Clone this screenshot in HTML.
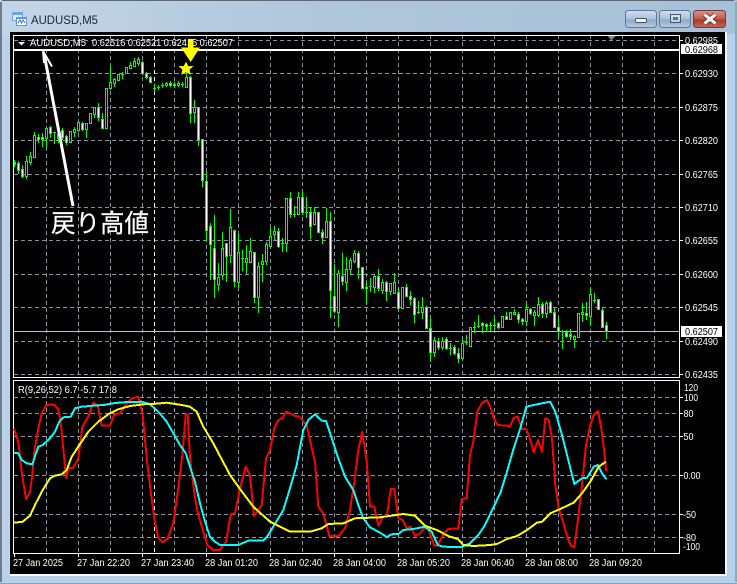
<!DOCTYPE html>
<html><head><meta charset="utf-8"><title>AUDUSD,M5</title>
<style>
html,body{margin:0;padding:0;background:#b8d0ea;width:737px;height:584px;overflow:hidden}
svg{display:block}
text{font-family:"Liberation Sans","Noto Sans CJK JP",sans-serif;font-size:10px;fill:#fff}
.c{shape-rendering:crispEdges}
</style></head><body>
<svg width="737" height="584" viewBox="0 0 737 584" xmlns="http://www.w3.org/2000/svg">
<defs>
<linearGradient id="tb" x1="0" x2="1" y1="0" y2="0"><stop offset="0" stop-color="#c4d5e7"/><stop offset=".45" stop-color="#afc6dc"/><stop offset="1" stop-color="#a7c0d8"/></linearGradient>
<linearGradient id="bb" x1="0" x2="0" y1="0" y2="1"><stop offset="0" stop-color="#cfdeee"/><stop offset=".5" stop-color="#a9c1da"/><stop offset=".55" stop-color="#8fabc8"/><stop offset="1" stop-color="#b5cbe2"/></linearGradient>
<linearGradient id="bc" x1="0" x2="0" y1="0" y2="1"><stop offset="0" stop-color="#d99486"/><stop offset=".5" stop-color="#c4584a"/><stop offset=".55" stop-color="#ae3626"/><stop offset="1" stop-color="#c46a58"/></linearGradient>
</defs>
<!-- window frame -->
<rect width="737" height="584" fill="#b8d0ea"/>
<rect x="0" y="0" width="737" height="34" fill="url(#tb)"/>
<g class="c">
<rect x="2" y="0" width="732" height="1" fill="#5c6a78"/>
<rect x="0" y="2" width="2" height="580" fill="#6d7d8d"/>
<rect x="2" y="34" width="8" height="540" fill="#bcd2ea"/>
<rect x="735" y="2" width="2" height="580" fill="#50c4d6"/>
<rect x="0" y="583" width="737" height="1" fill="#46bfd2"/>
<rect x="725" y="32" width="2" height="544" fill="#f4f8fc"/>
<rect x="10" y="574" width="717" height="2" fill="#f4f8fc"/>
<rect x="10" y="32" width="715" height="542" fill="#000"/>
</g>
<!-- title icon -->
<g class="c">
<rect x="12" y="12" width="11" height="9" fill="#6ea6e4"/><rect x="13" y="15" width="9" height="5" fill="#dfeafa"/>
<rect x="16" y="17" width="11" height="9" fill="#5c98dc"/><rect x="17" y="19" width="9" height="6" fill="#fff"/>
</g>
<path d="M18 23l2-3 1.500 3 1.500-3 2 3" fill="none" stroke="#3b78c4" stroke-width="1"/>
<text x="31" y="24" style="font-size:12px;fill:#1c2530" textLength="67" lengthAdjust="spacingAndGlyphs">AUDUSD,M5</text>
<!-- buttons -->
<rect x="625.500" y="10.500" width="31" height="17" rx="3" fill="url(#bb)" stroke="#5f7a96"/>
<rect x="659.500" y="10.500" width="31" height="17" rx="3" fill="url(#bb)" stroke="#5f7a96"/>
<rect x="693.500" y="10.500" width="32" height="17" rx="3" fill="url(#bc)" stroke="#6e3a40"/>
<rect x="635.500" y="18.500" width="11" height="4" rx="1" fill="#f2f5f8" stroke="#45566a"/>
<rect x="670.500" y="14.500" width="10" height="8" fill="none" stroke="#45566a"/><rect x="672" y="16" width="7" height="5" fill="none" stroke="#eef3f8"/><rect x="673" y="17" width="5" height="3" fill="#45566a" opacity=".7"/>
<path d="M704.500 14.500l11 9M715.500 14.500l-11 9" stroke="#5a2a28" stroke-width="5"/>
<path d="M704.500 14.500l11 9M715.500 14.500l-11 9" stroke="#f4f2f2" stroke-width="3.200"/>
<!-- grid -->
<g class="c" fill="none" stroke="#87949f" stroke-dasharray="4 3">
<path d="M14 40.500H680M14 73.500H680M14 107.500H680M14 140.500H680M14 174.500H680M14 207.500H680M14 240.500H680M14 274.500H680M14 307.500H680M14 341.500H680M14 374.500H680M14 397.500H680M14 413.500H680M14 436.500H680M14 475.500H680M14 514.500H680M14 537.500H680"/>
<path d="M46.500 35V378M78.500 35V378M110.500 35V378M142.500 35V378M174.500 35V378M206.500 35V378M238.500 35V378M270.500 35V378M302.500 35V378M334.500 35V378M366.500 35V378M398.500 35V378M430.500 35V378M462.500 35V378M494.500 35V378M526.500 35V378M558.500 35V378M590.500 35V378M622.500 35V378M654.500 35V378"/>
<path d="M46.500 380V553M78.500 380V553M110.500 380V553M142.500 380V553M174.500 380V553M206.500 380V553M238.500 380V553M270.500 380V553M302.500 380V553M334.500 380V553M366.500 380V553M398.500 380V553M430.500 380V553M462.500 380V553M494.500 380V553M526.500 380V553M558.500 380V553M590.500 380V553M622.500 380V553M654.500 380V553"/>
<path stroke="#fff" d="M154.500 35V378M154.500 380V553"/>
</g>
<!-- bid line -->
<rect class="c" x="14" y="331" width="666" height="1" fill="#c0c0c0"/>
<!-- candles -->
<g class="c" fill="none" stroke="#00ff00" stroke-width="1">
<path d="M14.500 160V167M18.500 161V174M22.500 165V178M26.500 156V179M30.500 152V165M34.500 132V157M38.500 134V143M42.500 133V147M46.500 128V148M50.500 126V138M54.500 132V144M58.500 132V143M62.500 128V140M66.500 135V145M70.500 131V142M74.500 127V137M78.500 122V132M82.500 122V131M86.500 123V138M90.500 113V123M94.500 107V118M98.500 103V121M102.500 113V129M106.500 88V128M110.500 65V90M114.500 78V87M118.500 74V80M122.500 72V79M126.500 67V74M130.500 62V69M134.500 58V67M138.500 57V66M142.500 61V75M146.500 72V79M150.500 76V83M154.500 84V92M158.500 85V90M162.500 83V88M166.500 82V87M170.500 81V87M174.500 82V88M178.500 81V87M182.500 82V87M186.500 72V87M190.500 76V123M194.500 100V123M198.500 107V146M202.500 139V187M206.500 171V242M210.500 223V280M214.500 215V298M218.500 263V291M222.500 232V280M226.500 243V282M230.500 209V263M234.500 230V287M238.500 233V288M242.500 250V271M246.500 245V274M250.500 238V262M254.500 252V303M258.500 262V313M262.500 254V282M266.500 242V265M270.500 227V246M274.500 226V240M278.500 228V248M282.500 238V252M286.500 198V252M290.500 192V218M294.500 206V217M298.500 192V214M302.500 192V215M306.500 197V218M310.500 208V239M314.500 207V224M318.500 212V233M322.500 229V244M326.500 208V237M330.500 212V318M334.500 264V313M338.500 270V327M342.500 253V285M346.500 257V291M350.500 258V275M354.500 250V263M358.500 251V279M362.500 267V289M366.500 282V303M370.500 278V292M374.500 275V293M378.500 269V291M382.500 279V294M386.500 281V301M390.500 283V295M394.500 273V294M398.500 287V308M402.500 287V308M406.500 284V297M410.500 291V305M414.500 297V323M418.500 301V314M422.500 297V319M426.500 306V329M430.500 317V362M434.500 337V357M438.500 338V350M442.500 337V350M446.500 337V350M450.500 343V355M454.500 345V355M458.500 348V363M462.500 340V358M466.500 335V345M470.500 327V346M474.500 322V333M478.500 315V328M482.500 322V333M486.500 323V332M490.500 322V331M494.500 317V330M498.500 322V329M502.500 316V328M506.500 312V320M510.500 312V319M514.500 309V315M518.500 312V323M522.500 318V325M526.500 303V325M530.500 308V315M534.500 310V326M538.500 297V317M542.500 302V318M546.500 301V318M550.500 301V313M554.500 308V327M558.500 318V338M562.500 330V349M566.500 330V338M570.500 329V340M574.500 335V348M578.500 313V337M582.500 303V322M586.500 302V320M590.500 287V326M594.500 293V303M598.500 299V309M602.500 307V328M606.500 322V339"/>
<path d="M53 132.500h3M281 243.500h3M293 214.500h3M305 212.500h3M241 258.500h3M369 286.500h3M449 348.500h3M561 331.500h3M465 342.500h3M473 327.500h3M477 326.500h3M489 325.500h3M493 325.500h3M153 88.500h3M157 87.500h3M161 85.500h3M181 84.500h3M121 74.500h3M417 312.500h3M593 300.500h3"/>
<!-- hollow -->
<path fill="#000" d="M25.500 161.500h2V176.500h-2zM29.500 156.500h2V162.500h-2zM33.500 135.500h2V157.500h-2zM45.500 128.500h2V138.500h-2zM57.500 134.500h2V138.500h-2zM69.500 131.500h2V142.500h-2zM73.500 129.500h2V132.500h-2zM77.500 122.500h2V130.500h-2zM85.500 123.500h2V129.500h-2zM89.500 113.500h2V123.500h-2zM93.500 107.500h2V114.500h-2zM105.500 88.500h2V128.500h-2zM109.500 82.500h2V88.500h-2zM113.500 79.500h2V83.500h-2zM117.500 74.500h2V80.500h-2zM125.500 67.500h2V73.500h-2zM129.500 65.500h2V68.500h-2zM133.500 61.500h2V66.500h-2zM137.500 59.500h2V63.500h-2zM165.500 83.500h2V85.500h-2zM173.500 84.500h2V85.500h-2zM177.500 83.500h2V85.500h-2zM185.500 77.500h2V87.500h-2zM193.500 107.500h2V112.500h-2zM217.500 277.500h2V284.500h-2zM221.500 248.500h2V275.500h-2zM229.500 227.500h2V255.500h-2zM237.500 252.500h2V282.500h-2zM245.500 258.500h2V262.500h-2zM249.500 251.500h2V262.500h-2zM257.500 266.500h2V297.500h-2zM261.500 261.500h2V264.500h-2zM265.500 244.500h2V261.500h-2zM269.500 236.500h2V246.500h-2zM273.500 231.500h2V234.500h-2zM285.500 198.500h2V243.500h-2zM297.500 197.500h2V214.500h-2zM313.500 212.500h2V224.500h-2zM325.500 221.500h2V237.500h-2zM337.500 273.500h2V312.500h-2zM345.500 269.500h2V282.500h-2zM349.500 260.500h2V269.500h-2zM353.500 253.500h2V261.500h-2zM365.500 287.500h2V288.500h-2zM373.500 276.500h2V287.500h-2zM381.500 282.500h2V290.500h-2zM389.500 283.500h2V291.500h-2zM393.500 282.500h2V293.500h-2zM401.500 287.500h2V308.500h-2zM421.500 307.500h2V312.500h-2zM433.500 340.500h2V352.500h-2zM441.500 341.500h2V347.500h-2zM461.500 343.500h2V358.500h-2zM469.500 327.500h2V346.500h-2zM501.500 316.500h2V327.500h-2zM509.500 312.500h2V319.500h-2zM513.500 312.500h2V314.500h-2zM525.500 309.500h2V321.500h-2zM533.500 312.500h2V315.500h-2zM537.500 304.500h2V315.500h-2zM545.500 303.500h2V313.500h-2zM573.500 336.500h2V339.500h-2zM577.500 313.500h2V337.500h-2zM581.500 312.500h2V314.500h-2zM589.500 294.500h2V316.500h-2z"/>
<!-- white -->
<path fill="#fff" d="M13.500 162.500h2V164.500h-2zM17.500 163.500h2V170.500h-2zM21.500 169.500h2V176.500h-2zM37.500 137.500h2V139.500h-2zM41.500 137.500h2V139.500h-2zM49.500 127.500h2V133.500h-2zM61.500 130.500h2V137.500h-2zM65.500 136.500h2V142.500h-2zM81.500 123.500h2V129.500h-2zM97.500 107.500h2V117.500h-2zM101.500 119.500h2V128.500h-2zM141.500 62.500h2V73.500h-2zM145.500 73.500h2V77.500h-2zM149.500 77.500h2V82.500h-2zM169.500 83.500h2V85.500h-2zM189.500 77.500h2V113.500h-2zM197.500 107.500h2V140.500h-2zM201.500 139.500h2V180.500h-2zM205.500 181.500h2V230.500h-2zM209.500 226.500h2V244.500h-2zM213.500 248.500h2V279.500h-2zM225.500 243.500h2V256.500h-2zM233.500 230.500h2V281.500h-2zM253.500 252.500h2V297.500h-2zM277.500 231.500h2V246.500h-2zM289.500 198.500h2V214.500h-2zM301.500 197.500h2V212.500h-2zM309.500 212.500h2V226.500h-2zM317.500 212.500h2V232.500h-2zM321.500 232.500h2V237.500h-2zM329.500 221.500h2V290.500h-2zM333.500 296.500h2V311.500h-2zM341.500 276.500h2V281.500h-2zM357.500 253.500h2V267.500h-2zM361.500 267.500h2V288.500h-2zM377.500 276.500h2V288.500h-2zM385.500 282.500h2V291.500h-2zM397.500 292.500h2V308.500h-2zM405.500 287.500h2V296.500h-2zM409.500 296.500h2V299.500h-2zM413.500 298.500h2V314.500h-2zM425.500 307.500h2V328.500h-2zM429.500 328.500h2V352.500h-2zM437.500 341.500h2V347.500h-2zM445.500 339.500h2V348.500h-2zM453.500 347.500h2V353.500h-2zM457.500 353.500h2V358.500h-2zM481.500 323.500h2V325.500h-2zM485.500 324.500h2V326.500h-2zM497.500 323.500h2V327.500h-2zM505.500 316.500h2V319.500h-2zM517.500 314.500h2V319.500h-2zM521.500 319.500h2V321.500h-2zM529.500 309.500h2V313.500h-2zM541.500 304.500h2V313.500h-2zM549.500 302.500h2V312.500h-2zM553.500 312.500h2V327.500h-2zM557.500 327.500h2V331.500h-2zM565.500 332.500h2V336.500h-2zM569.500 334.500h2V336.500h-2zM585.500 313.500h2V315.500h-2zM597.500 299.500h2V309.500h-2zM601.500 310.500h2V327.500h-2zM605.500 325.500h2V331.500h-2z"/>
</g>
<!-- plot borders -->
<g class="c" fill="none" stroke="#fff">
<rect x="13.500" y="35.500" width="666" height="342"/>
<rect x="13.500" y="380.500" width="666" height="173"/>
<path d="M14 50H680" stroke-width="2"/>
<path d="M14.500 554V557M78.500 554V557M142.500 554V557M206.500 554V557M270.500 554V557M334.500 554V557M398.500 554V557M462.500 554V557M526.500 554V557M590.500 554V557"/>
<path d="M680 40.500h3M680 73.500h3M680 107.500h3M680 140.500h3M680 174.500h3M680 207.500h3M680 240.500h3M680 274.500h3M680 307.500h3M680 341.500h3M680 374.500h3M680 397.500h3M680 413.500h3M680 436.500h3M680 475.500h3M680 514.500h3M680 537.500h3"/>
</g>
<!-- top-right grey triangle -->
<path d="M607.500 36h8l-4 4.500z" fill="#778899"/>
<!-- indicator lines -->
<g class="c" fill="none" stroke-width="2" stroke-linejoin="round">
<polyline stroke="#ff0000" points="14,429 18.300,441.700 21.700,471.700 26,499.300 30,491.700 32.300,475 34.300,451.700 38.300,428.300 41.700,413.300 46,405.700 50,404.300 54.300,405 58.300,409 61,425 65,466.700 66,478 68.300,468.300 73.300,467.700 78.300,458.300 82.300,426.700 88.300,416.700 93.300,402.700 97.700,405 101.700,425.700 110,425.700 114.300,414.300 120,413.300 126.700,403.300 131.700,398.300 138.300,396.700 142.700,415 146.700,458.300 150.700,491.700 154.300,518.300 158.300,538.300 162.700,542.300 167.700,538.300 173.300,523.300 178.300,488.300 182.700,451.700 185.700,414.300 187.700,414.300 190,458.300 195,498.300 198.300,515 203.300,531.700 207.300,545 213.300,550 220,550 226,541.700 230.700,514.300 235,513.300 240,488.300 245.700,466.700 250,475 254,516 261.700,505 266,458.300 270,450 274.300,428.300 278.300,420 282.300,418.300 286,411.700 290,413.300 294.300,415.700 299.300,416.700 306.700,425 311,445 315,461.700 318.300,506.700 323.300,513.300 329.300,536 338.300,536 345,528.300 350,510 354.300,481.700 358.300,450 362.300,431.700 366.700,461.700 370,506.700 374.300,506.700 378.300,525.700 382.700,516.700 386.700,516.700 390.700,489 394.300,489 398.300,518.300 402.700,520 406.700,528.300 410.700,526.700 415,536 420,533.300 424,528.300 428.300,529 434.300,545.700 437.300,545.700 444,533.300 448.300,529 458.300,528.300 461.700,499 466.700,498.300 470,455 473.300,441.700 477.300,411.700 481.700,403.300 486.700,400 490.300,406.700 493.700,418.300 497.700,425 510.300,426 513.700,417.700 517.700,416.700 522,429 526.300,429.300 530.300,440 533.700,452.300 538,440 542,451.700 545.300,418.300 548.700,420 552,438.300 555.300,485 558.700,508.300 563,521.700 567.700,538.300 571,545.700 574.300,547.300 577.700,521.700 582,485 586,445 590.300,425 593.700,415 598,411 601.300,428.300 604.300,451.700 606,471"/>
<polyline stroke="#00ffff" points="14,452.700 18.300,453.300 21.700,460 26.700,463.300 32.300,464.300 34.300,458.300 38.300,446.700 42.700,445 50,438.300 55,431.700 59.300,421.700 63.300,417.300 70.700,416.700 75,408.300 81.700,406.700 93.300,405.700 103.300,405 113.300,403.300 123.300,402.300 141.700,401.700 150,404.300 158.300,411.700 166.700,421.700 173.300,433.300 180,445 185.700,453.300 190,466.700 195,481.700 200,503.300 205,521.700 210,536.700 215,541.700 220,545 238.300,545 248.300,540.700 263.300,540.700 268.300,535 273.300,526.700 283.300,510 290,488.300 296.700,465 303.300,430 308.300,420 315,414.300 321.700,420.700 326,421 331.700,438.300 338.300,458.300 345,476.700 353.300,490 358.300,505 363.300,518.300 370,527.300 380,532.700 386.700,537 391.700,534.300 398.300,534 403.300,530 413.300,529 425,526.700 431.700,531.700 437.700,545 443.300,546.700 461.700,547 470,543.300 478.300,535 485,525 493.700,506.700 500.300,493.300 507,471.700 513.700,448.300 520.300,428.300 526.300,406.700 537,404.300 550.300,401.700 555.300,411.700 562,435 568.700,461.700 574.300,484 582,478.300 587,477.700 593.700,466.700 598,465 602,473.300 606.300,479.300"/>
<polyline stroke="#ffff00" points="14,522.700 22.700,521.700 30,515.700 35,505 41.700,491.700 50,478.300 55,475.700 61.700,474.300 66.700,470 71.700,456.700 78.300,446.700 88.300,431.700 98.300,421.700 108.300,414.300 118.300,409.300 130,406 143.300,404.300 156.700,403.700 166.700,402.700 181.700,405 190,406.700 196.700,411.700 203.300,426.700 213.300,443.300 230,475 240,489 253.300,506.700 270,521.700 290,531.700 310,531.700 321.700,528.300 328.300,524 343.300,523.300 355,518.300 380,517.300 403.300,514 415,515.700 425,525.700 436.700,530 448.300,536 458.300,539.300 463.300,545 473.300,546 490,545 497,544 507,539 517,536 527,530 537,522.700 542,521.700 550.300,513.300 560.300,509 573.700,502.700 582,493.300 590.300,481.700 598.700,466.700 606,461.700"/>
</g>
<!-- white annotation arrow -->
<path d="M73 206L44.500 56" stroke="#fff" stroke-width="3" fill="none"/>
<path d="M43 51L52 66.500 M43 51L44 63" stroke="#fff" stroke-width="2" fill="none"/>
<!-- header -->
<path d="M18 42h7l-3.500 3.500z" fill="#fff"/>
<text x="30" y="46" textLength="56" lengthAdjust="spacingAndGlyphs">AUDUSD,M5</text>
<text x="92" y="46" textLength="141" lengthAdjust="spacingAndGlyphs">0.62516 0.62521 0.62415 0.62507</text>
<!-- yellow arrow and star -->
<path d="M188 39h5.500v8.500H200L190.700 62 181 47.500h7z" fill="#ffff00"/>
<path d="M186 61.500l2.200 4.600h5.300l-4 3.600 1.400 5.200-4.900-2.800-4.900 2.800 1.400-5.200-4-3.600h5.300z" fill="#ffff00"/>
<!-- price labels -->
<g>
<text x="685" y="44" textLength="33" lengthAdjust="spacingAndGlyphs">0.62985</text>
<text x="685" y="77" textLength="33" lengthAdjust="spacingAndGlyphs">0.62930</text>
<text x="685" y="111" textLength="33" lengthAdjust="spacingAndGlyphs">0.62875</text>
<text x="685" y="144" textLength="33" lengthAdjust="spacingAndGlyphs">0.62820</text>
<text x="685" y="178" textLength="33" lengthAdjust="spacingAndGlyphs">0.62765</text>
<text x="685" y="211" textLength="33" lengthAdjust="spacingAndGlyphs">0.62710</text>
<text x="685" y="244" textLength="33" lengthAdjust="spacingAndGlyphs">0.62655</text>
<text x="685" y="278" textLength="33" lengthAdjust="spacingAndGlyphs">0.62600</text>
<text x="685" y="311" textLength="33" lengthAdjust="spacingAndGlyphs">0.62545</text>
<text x="685" y="345" textLength="33" lengthAdjust="spacingAndGlyphs">0.62490</text>
<text x="685" y="378" textLength="33" lengthAdjust="spacingAndGlyphs">0.62435</text>
</g>
<rect class="c" x="681" y="44" width="41" height="10" fill="#fff"/>
<text x="685" y="53" textLength="33" lengthAdjust="spacingAndGlyphs" style="fill:#000">0.62968</text>
<rect class="c" x="681" y="326" width="41" height="11" fill="#fff"/>
<text x="685" y="335" textLength="33" lengthAdjust="spacingAndGlyphs" style="fill:#000">0.62507</text>
<!-- indicator axis labels -->
<text x="684" y="391" textLength="14" lengthAdjust="spacingAndGlyphs">120</text>
<text x="684" y="401" textLength="14" lengthAdjust="spacingAndGlyphs">100</text>
<text x="683.500" y="417" textLength="10" lengthAdjust="spacingAndGlyphs">80</text>
<text x="683.500" y="440" textLength="10" lengthAdjust="spacingAndGlyphs">50</text>
<text x="683.500" y="479" textLength="17" lengthAdjust="spacingAndGlyphs">0.00</text>
<text x="683" y="518" textLength="13" lengthAdjust="spacingAndGlyphs">-50</text>
<text x="683" y="541" textLength="13" lengthAdjust="spacingAndGlyphs">-80</text>
<text x="683" y="550" textLength="17" lengthAdjust="spacingAndGlyphs">-100</text>
<!-- indicator header -->
<text x="18" y="393" textLength="99" lengthAdjust="spacingAndGlyphs">R(9,26,52) 6.7 -5.7 17.8</text>
<!-- time axis -->
<text x="13" y="566" textLength="50" lengthAdjust="spacingAndGlyphs">27 Jan 2025</text>
<text x="77" y="566" textLength="53" lengthAdjust="spacingAndGlyphs">27 Jan 22:20</text>
<text x="141" y="566" textLength="53" lengthAdjust="spacingAndGlyphs">27 Jan 23:40</text>
<text x="205" y="566" textLength="53" lengthAdjust="spacingAndGlyphs">28 Jan 01:20</text>
<text x="269" y="566" textLength="53" lengthAdjust="spacingAndGlyphs">28 Jan 02:40</text>
<text x="333" y="566" textLength="53" lengthAdjust="spacingAndGlyphs">28 Jan 04:00</text>
<text x="397" y="566" textLength="53" lengthAdjust="spacingAndGlyphs">28 Jan 05:20</text>
<text x="461" y="566" textLength="53" lengthAdjust="spacingAndGlyphs">28 Jan 06:40</text>
<text x="525" y="566" textLength="53" lengthAdjust="spacingAndGlyphs">28 Jan 08:00</text>
<text x="589" y="566" textLength="53" lengthAdjust="spacingAndGlyphs">28 Jan 09:20</text>
<!-- annotation text -->
<text x="51" y="232" textLength="98" lengthAdjust="spacingAndGlyphs" style="font-size:25px;stroke:#fff;stroke-width:.25">戻り高値</text>
</svg>
</body></html>
